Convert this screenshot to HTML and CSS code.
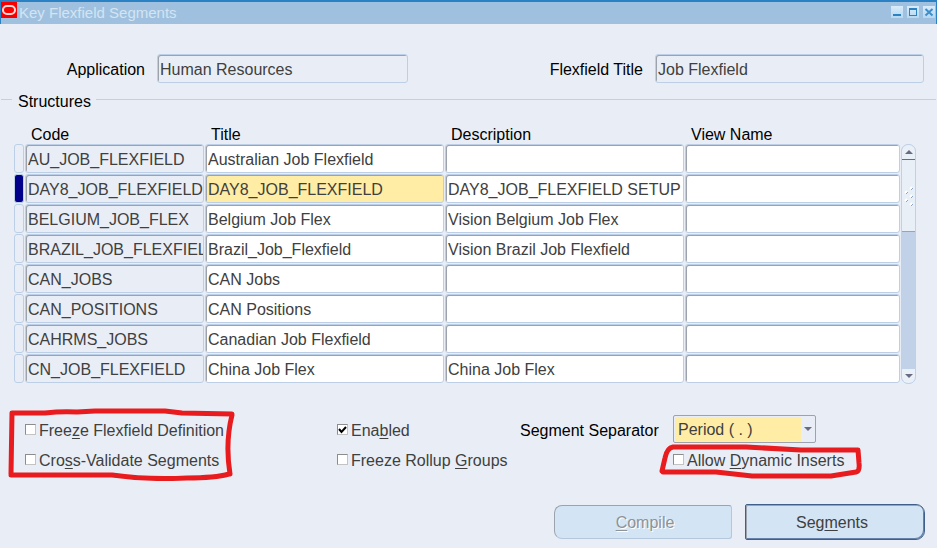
FILE: index.html
```
<!doctype html>
<html lang="en">
  <head>
    <meta charset="UTF-8" />
    <meta name="viewport" content="width=device-width, initial-scale=1" />
    <title>Key Flexfield Segments</title>
    <link rel="stylesheet" href="styles.css">
  </head>
  <body>
    <header class="titlebar">
      <svg class="logo" width="16" height="16" viewBox="0 0 16 16">
        <rect width="16" height="16" fill="#f80000" />
        <rect x="2" y="4" width="12" height="8" rx="4" fill="none" stroke="#ffd9d9" stroke-width="2" />
      </svg>
      <h1>Key Flexfield Segments</h1>
      <div class="window-controls">
        <button type="button" aria-label="Minimize">
          <svg width="12" height="12" viewBox="0 0 12 12"><path d="M2 8h8v2H2z" fill="#2a82c0" /></svg>
        </button>
        <button type="button" aria-label="Maximize">
          <svg width="12" height="12" viewBox="0 0 12 12"><path d="M2 2h8v8H2zM3 4v5h6V4z" fill="#2a82c0" fill-rule="evenodd" /></svg>
        </button>
        <button type="button" aria-label="Close">
          <svg width="12" height="12" viewBox="0 0 12 12"><path d="M2.500 3l7 6.500M9.500 3l-7 6.500" stroke="#3c8fca" stroke-width="2" /></svg>
        </button>
      </div>
    </header>

    <form class="form">
      <div class="heading">
        <label for="application">Application</label>
        <input class="field readonly" type="text" id="application" value="Human Resources" readonly />
        <label for="flexTitle">Flexfield Title</label>
        <input class="field readonly" type="text" id="flexTitle" value="Job Flexfield" readonly />
      </div>

      <fieldset class="structures">
        <legend>Structures</legend>
        <div class="grid-wrap">
          <table>
            <colgroup>
              <col class="col-marker" />
              <col class="col-code" />
              <col class="col-title" />
              <col class="col-desc" />
              <col />
            </colgroup>
            <thead>
              <tr>
                <td></td>
                <th scope="col">Code</th>
                <th scope="col">Title</th>
                <th scope="col">Description</th>
                <th scope="col">View Name</th>
              </tr>
            </thead>
            <tbody>
              <tr>
                <td><button class="marker" type="button" aria-label="Select row"></button></td>
                <td><input class="field readonly" aria-label="Code" value="AU_JOB_FLEXFIELD" readonly /></td>
                <td><input class="field" aria-label="Title" value="Australian Job Flexfield" /></td>
                <td><input class="field" aria-label="Description" /></td>
                <td><input class="field" aria-label="View Name" /></td>
              </tr>
              <tr class="current">
                <td><button class="marker" type="button" aria-label="Select row"></button></td>
                <td><input class="field readonly" aria-label="Code" value="DAY8_JOB_FLEXFIELD" readonly /></td>
                <td><input class="field required" aria-label="Title" value="DAY8_JOB_FLEXFIELD" /></td>
                <td><input class="field" aria-label="Description" value="DAY8_JOB_FLEXFIELD SETUP" /></td>
                <td><input class="field" aria-label="View Name" /></td>
              </tr>
              <tr>
                <td><button class="marker" type="button" aria-label="Select row"></button></td>
                <td><input class="field readonly" aria-label="Code" value="BELGIUM_JOB_FLEX" readonly /></td>
                <td><input class="field" aria-label="Title" value="Belgium Job Flex" /></td>
                <td><input class="field" aria-label="Description" value="Vision Belgium Job Flex" /></td>
                <td><input class="field" aria-label="View Name" /></td>
              </tr>
              <tr>
                <td><button class="marker" type="button" aria-label="Select row"></button></td>
                <td><input class="field readonly" aria-label="Code" value="BRAZIL_JOB_FLEXFIELD" readonly /></td>
                <td><input class="field" aria-label="Title" value="Brazil_Job_Flexfield" /></td>
                <td><input class="field" aria-label="Description" value="Vision Brazil Job Flexfield" /></td>
                <td><input class="field" aria-label="View Name" /></td>
              </tr>
              <tr>
                <td><button class="marker" type="button" aria-label="Select row"></button></td>
                <td><input class="field readonly" aria-label="Code" value="CAN_JOBS" readonly /></td>
                <td><input class="field" aria-label="Title" value="CAN Jobs" /></td>
                <td><input class="field" aria-label="Description" /></td>
                <td><input class="field" aria-label="View Name" /></td>
              </tr>
              <tr>
                <td><button class="marker" type="button" aria-label="Select row"></button></td>
                <td><input class="field readonly" aria-label="Code" value="CAN_POSITIONS" readonly /></td>
                <td><input class="field" aria-label="Title" value="CAN Positions" /></td>
                <td><input class="field" aria-label="Description" /></td>
                <td><input class="field" aria-label="View Name" /></td>
              </tr>
              <tr>
                <td><button class="marker" type="button" aria-label="Select row"></button></td>
                <td><input class="field readonly" aria-label="Code" value="CAHRMS_JOBS" readonly /></td>
                <td><input class="field" aria-label="Title" value="Canadian Job Flexfield" /></td>
                <td><input class="field" aria-label="Description" /></td>
                <td><input class="field" aria-label="View Name" /></td>
              </tr>
              <tr>
                <td><button class="marker" type="button" aria-label="Select row"></button></td>
                <td><input class="field readonly" aria-label="Code" value="CN_JOB_FLEXFIELD" readonly /></td>
                <td><input class="field" aria-label="Title" value="China Job Flex" /></td>
                <td><input class="field" aria-label="Description" value="China Job Flex" /></td>
                <td><input class="field" aria-label="View Name" /></td>
              </tr>
            </tbody>
          </table>

          <div class="scrollbar">
            <button class="scroll-up" type="button" aria-label="Scroll up">
              <svg width="8" height="4" viewBox="0 0 8 4"><path d="M0 4l4-4 4 4z" fill="#6a6a80" /></svg>
            </button>
            <div class="thumb">
              <svg width="10" height="20" viewBox="0 0 10 20">
                <path d="M6 3l2-2M1 7l2-2M6 11l2-2M1 15l2-2M6 19l2-2" stroke="#fff" stroke-width="2" />
                <path d="M7 4l2-2M2 8l2-2M7 12l2-2M2 16l2-2M7 20l2-2" stroke="#8ba6c4" />
              </svg>
            </div>
            <button class="scroll-down" type="button" aria-label="Scroll down">
              <svg width="8" height="4" viewBox="0 0 8 4"><path d="M0 0l4 4 4-4z" fill="#6a6a80" /></svg>
            </button>
          </div>
        </div>
      </fieldset>

      <div class="options">
        <div class="option-group">
          <label class="check"><input type="checkbox" /><span>Free<u>z</u>e Flexfield Definition</span></label>
          <label class="check"><input type="checkbox" /><span>Cro<u>s</u>s-Validate Segments</span></label>
          <svg class="mark mark-left" width="230" height="76" viewBox="0 0 230 76">
            <path d="M5 8L4 69M5 8L38 8Q55 6 70 7L88 6L158 6L175 8L225 9M225 10Q218 38 223 69M4 70L105 70Q140 75 180 73Q208 73 222 69" />
          </svg>
        </div>
        <div class="option-group">
          <label class="check"><input type="checkbox" checked /><span>Ena<u>b</u>led</span></label>
          <label class="check"><input type="checkbox" /><span>Freeze Rollup <u>G</u>roups</span></label>
        </div>
        <label class="separator-label" for="separator">Segment Separator</label>
        <div class="option-group">
          <div class="select-wrap">
            <select id="separator">
              <option>Period ( . )</option>
            </select>
          </div>
          <label class="check"><input type="checkbox" /><span>Allow <u>D</u>ynamic Inserts</span></label>
          <svg class="mark mark-right" width="206" height="36" viewBox="0 0 206 36">
            <path d="M7 29L60 29L96 33L175 33L200 29Q204 28 203 20L202 7L145 7L90 4L17 4Q11 5 9 15L6 28" />
          </svg>
        </div>
      </div>

      <div class="actions">
        <button class="btn btn-compile" type="button" disabled><u>C</u>ompile</button>
        <button class="btn btn-segments" type="button">Seg<u>m</u>ents</button>
      </div>
    </form>
  </body>
</html>
```
FILE: styles.css
```
* {
  box-sizing: border-box;
}
body {
  margin: 0;
  min-height: 100vh;
  background: #e9eef6;
  color: #000;
  font-family: 'Liberation Sans', Arial, sans-serif;
  font-size: 16px;
  line-height: 20px;
}
input,
select,
button {
  margin: 0;
  font: inherit;
  color: #404040;
}
button {
  padding: 0;
  cursor: pointer;
}
svg {
  display: block;
}

/* title bar */
.titlebar {
  display: flex;
  align-items: flex-start;
  height: 24px;
  border: solid #2a82c4;
  border-width: 2px 1px 0;
  background: #9fc1df;
}
.titlebar h1 {
  flex: 1;
  margin: 0;
  padding: 1px 0 0 2px;
  font-size: 15px;
  font-weight: 400;
  color: #d3e4f3;
}
.window-controls {
  display: flex;
  gap: 4px;
  padding: 4px 1px 0 0;
}
.window-controls button {
  width: 12px;
  height: 12px;
  border: 0;
  background: linear-gradient(#d8ebfa, #b5d8f2);
}

/* text fields */
.field {
  display: block;
  width: 100%;
  height: 29px;
  padding: 2px 0 0 2px;
  border: 1px solid #bdcfe6;
  border-radius: 3px;
  background: #fff;
  box-shadow: inset 1px 1px #9da3ac;
  outline: none;
}
.field.readonly {
  background: #e9eef6;
}
.field.required {
  background: #ffeda5;
}

.heading {
  display: grid;
  grid-template-columns: 145fr 251fr 223fr 269fr;
  column-gap: 12px;
  align-items: center;
  padding: 30px 13px 0 0;
}
.heading label {
  padding-top: 2px;
  text-align: right;
}

/* structures grid */
.structures {
  min-width: 0;
  margin: 4px 1px 0;
  padding: 12px 20px 0 13px;
  border: 0;
  border-top: 1px solid #bfd0e8;
}
.structures legend {
  margin-left: -2px;
  padding: 5px 5px 0 6px;
}
.grid-wrap {
  display: flex;
  align-items: flex-end;
}
table {
  flex: 1;
  width: 0;
  table-layout: fixed;
  border-collapse: collapse;
}
.col-marker {
  width: 11px;
}
.col-code {
  width: 180px;
}
.col-title,
.col-desc {
  width: 240px;
}
th {
  padding: 2px 0 0 6px;
  font-weight: 400;
  line-height: 18px;
  text-align: left;
}
td {
  padding: 0 1px 1px 0;
}
thead td {
  padding: 0;
}
.marker {
  display: block;
  width: 10px;
  height: 29px;
  border: 1px solid #bdcfe6;
  border-radius: 3px;
  background: #e9eef6;
}
.current .marker {
  background: #00008b;
}

.scrollbar {
  display: flex;
  flex-direction: column;
  width: 15px;
  height: 240px;
  border: 1px solid #bfd0e8;
  border-radius: 7px;
  background: #c1d1e8;
  overflow: hidden;
}
.scrollbar button {
  display: flex;
  align-items: center;
  justify-content: center;
  height: 14px;
  border: 0;
  background: #eaf0f8;
}
.scrollbar .scroll-down {
  margin-top: auto;
}
.thumb {
  display: flex;
  align-items: center;
  justify-content: center;
  height: 73px;
  border-top: 1px solid #6a6a80;
  border-bottom: 1px solid #8fa5c2;
  background: #e9eff7;
}

/* options */
.options {
  display: grid;
  grid-template-columns: 312fr 183fr 153fr 264fr;
  padding: 31px 0 0 25px;
}
.option-group {
  position: relative;
}
.check {
  display: flex;
  align-items: center;
  gap: 3px;
  height: 30px;
  padding-top: 2px;
  color: #404040;
  white-space: nowrap;
}
.check input {
  appearance: none;
  width: 11px;
  height: 11px;
  margin-bottom: 4px;
  border: 1px solid #c3c3c3;
  border-top-color: #8c8c8c;
  border-left-color: #8c8c8c;
  background: #fff;
}
.check input:checked {
  background: #fff url("data:image/svg+xml,%3Csvg xmlns='http://www.w3.org/2000/svg' viewBox='0 0 9 9'%3E%3Cpath d='M1 4l2.500 3L8 2' fill='none' stroke='black' stroke-width='2'/%3E%3C/svg%3E");
}
u {
  text-underline-offset: 2px;
}
.separator-label {
  padding-top: 6px;
}
.select-wrap {
  position: relative;
  width: 143px;
  height: 30px;
}
.select-wrap::after {
  content: '';
  position: absolute;
  top: 12px;
  right: 4px;
  border: 4px solid transparent;
  border-top-color: #6a6a80;
  border-bottom: 0;
  pointer-events: none;
}
select {
  appearance: none;
  width: 100%;
  height: 28px;
  padding: 2px 16px 0 4px;
  border: 1px solid #9da3ac;
  border-radius: 2px;
  background: linear-gradient(#ffeda5, #ffeda5) 1px 1px / calc(100% - 15px) calc(100% - 2px) no-repeat #e9eef6;
  outline: none;
}

/* red hand-drawn marks */
.mark {
  position: absolute;
  fill: none;
  stroke: #e81c1f;
  stroke-width: 5;
  stroke-linecap: round;
  stroke-linejoin: round;
  pointer-events: none;
}
.mark-left {
  top: -10px;
  left: -18px;
}
.mark-right {
  top: 28px;
  left: -17px;
}

/* buttons */
.actions {
  display: flex;
  align-items: center;
  justify-content: flex-end;
  gap: 13px;
  padding: 29px 12px 8px 0;
}
.btn {
  background: #d3e4f4;
}
.btn-compile {
  width: 178px;
  height: 34px;
  padding: 2px 0 0 4px;
  border: 1px solid #b5c7dd;
  border-top-color: #9da3ac;
  border-left-color: #9da3ac;
  border-radius: 8px 3px 3px 8px;
  color: #8f9296;
  text-shadow: 1px 1px #fff;
}
.btn-segments {
  width: 180px;
  height: 36px;
  padding: 2px 6px 0 0;
  border: 1px solid #3f5f8c;
  border-radius: 2px 9px 9px 2px;
  box-shadow: inset 1px 1px #9da3ac, inset -1px -1px #6482aa;
}
```
